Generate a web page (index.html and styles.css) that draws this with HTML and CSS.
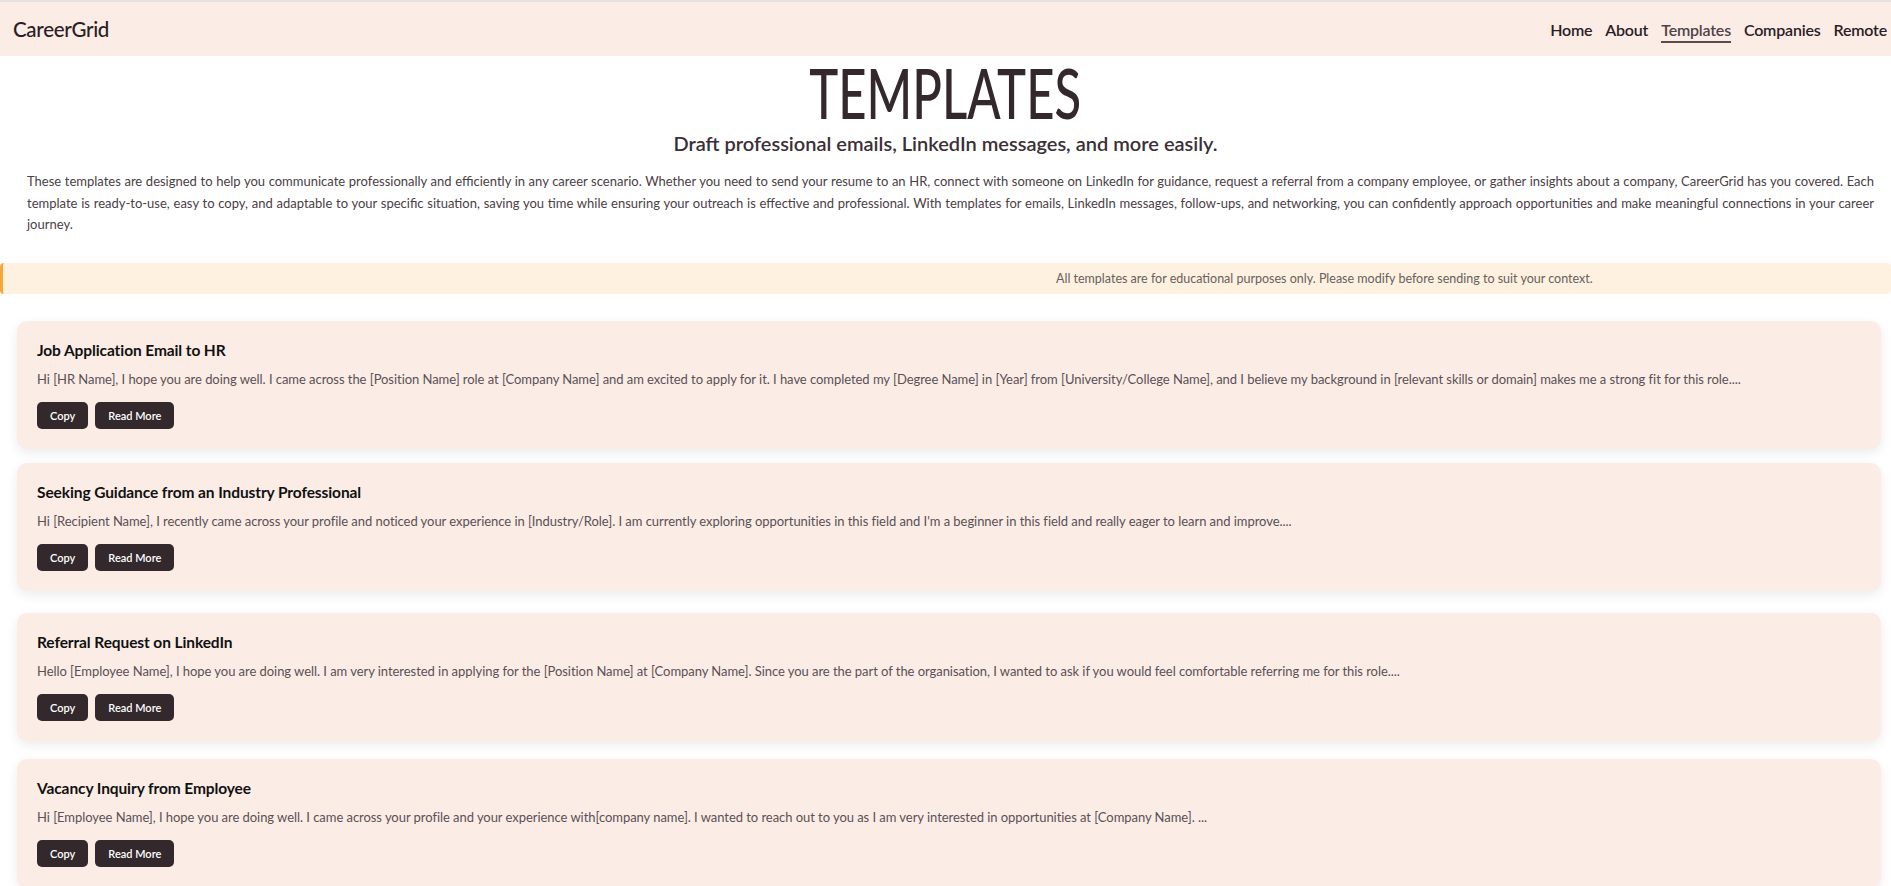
FILE: index.html
```html
<!DOCTYPE html>
<html lang="en">
<head>
<meta charset="utf-8">
<title>Templates | CareerGrid</title>
<link rel="stylesheet" href="styles.css">
</head>
<body>
<nav class="topnav">
  <a class="logo" href="#">CareerGrid</a>
  <ul class="nav-links">
    <li><a href="#">Home</a></li>
    <li><a href="#">About</a></li>
    <li><a class="active" href="#">Templates</a></li>
    <li><a href="#">Companies</a></li>
    <li><a href="#">Remote</a></li>
  </ul>
</nav>

<header class="hero">
  <h1 class="hero-title"><span class="hero-title-text">TEMPLATES</span></h1>
  <h2 class="hero-sub">Draft professional emails, LinkedIn messages, and more easily.</h2>
  <p class="hero-text">These templates are designed to help you communicate professionally and efficiently in any career scenario. Whether you need to send your resume to an HR, connect with someone on LinkedIn for guidance, request a referral from a company employee, or gather insights about a company, CareerGrid has you covered. Each template is ready-to-use, easy to copy, and adaptable to your specific situation, saving you time while ensuring your outreach is effective and professional. With templates for emails, LinkedIn messages, follow-ups, and networking, you can confidently approach opportunities and make meaningful connections in your career journey.</p>
</header>

<div class="notice">All templates are for educational purposes only. Please modify before sending to suit your context.</div>

<main class="cards">
  <section class="card">
    <h3 class="card-title">Job Application Email to HR</h3>
    <p class="card-text">Hi [HR Name], I hope you are doing well. I came across the [Position Name] role at [Company Name] and am excited to apply for it. I have completed my [Degree Name] in [Year] from [University/College Name], and I believe my background in [relevant skills or domain] makes me a strong fit for this role....</p>
    <div class="card-actions"><button class="btn">Copy</button><button class="btn">Read More</button></div>
  </section>
  <section class="card">
    <h3 class="card-title">Seeking Guidance from an Industry Professional</h3>
    <p class="card-text">Hi [Recipient Name], I recently came across your profile and noticed your experience in [Industry/Role]. I am currently exploring opportunities in this field and I'm a beginner in this field and really eager to learn and improve....</p>
    <div class="card-actions"><button class="btn">Copy</button><button class="btn">Read More</button></div>
  </section>
  <section class="card">
    <h3 class="card-title">Referral Request on LinkedIn</h3>
    <p class="card-text">Hello [Employee Name], I hope you are doing well. I am very interested in applying for the [Position Name] at [Company Name]. Since you are the part of the organisation, I wanted to ask if you would feel comfortable referring me for this role....</p>
    <div class="card-actions"><button class="btn">Copy</button><button class="btn">Read More</button></div>
  </section>
  <section class="card">
    <h3 class="card-title">Vacancy Inquiry from Employee</h3>
    <p class="card-text">Hi [Employee Name], I hope you are doing well. I came across your profile and your experience with[company name]. I wanted to reach out to you as I am very interested in opportunities at [Company Name]. ...</p>
    <div class="card-actions"><button class="btn">Copy</button><button class="btn">Read More</button></div>
  </section>
  <section class="card">
    <h3 class="card-title">Follow-up After Interview</h3>
    <p class="card-text">Hi [Interviewer Name], thank you for taking the time to speak with me about the [Position Name] role at [Company Name]. ...</p>
    <div class="card-actions"><button class="btn">Copy</button><button class="btn">Read More</button></div>
  </section>
</main>
</body>
</html>
```

FILE: styles.css
```css
* { box-sizing: border-box; }

html, body {
  margin: 0;
  padding: 0;
  background: #ffffff;
  overflow-x: hidden;
}

body {
  font-family: "Lato", "Liberation Sans", sans-serif;
  color: #33282b;
}

.topnav {
  display: flex;
  justify-content: space-between;
  align-items: center;
  height: 56px;
  padding: 0 4px 0 13px;
  background: #fbede6;
  border-top: 2px solid #e4e2e2;
}

.logo {
  font-size: 20.5px;
  font-weight: 500;
  color: #2a2024;
  text-decoration: none;
  letter-spacing: -0.3px;
}

.nav-links {
  list-style: none;
  display: flex;
  gap: 13px;
  margin: 0;
  padding: 0;
}

.nav-links a {
  display: block;
  font-size: 16px;
  font-weight: 600;
  color: #2a2024;
  text-decoration: none;
  letter-spacing: -0.2px;
  padding: 4px 0 2px;
  border-bottom: 2px solid transparent;
}

.nav-links a.active {
  color: #4e4247;
  border-bottom-color: #5b4b50;
}

.hero {
  text-align: center;
}

.hero-title {
  margin: 1px 0 0;
  font-size: 70px;
  line-height: 70px;
  font-weight: 500;
  color: #33282b;
}

.hero-title-text {
  display: inline-block;
  transform: scaleX(0.7);
}

.hero-sub {
  margin: 4px 0 0;
  font-size: 20px;
  line-height: 24px;
  font-weight: 600;
  color: #3b3035;
}

.hero-text {
  margin: 16px 0 0;
  padding: 0 17px 0 27px;
  font-size: 13px;
  line-height: 21.5px;
  text-align: justify;
  color: #4a4045;
}

.notice {
  margin: 27px 0 0;
  padding: 8px 0 8px 1053px;
  background: #fff1e0;
  border-left: 3px solid #f5a93a;
  border-radius: 4px;
  font-size: 12.5px;
  line-height: 15px;
  color: #66605f;
}

.cards {
  display: flex;
  flex-direction: column;
  gap: 14px;
  padding: 27px 10px 20px 17px;
}

.card {
  background: #fbede6;
  border-radius: 10px;
  padding: 19px 20px 20px;
  box-shadow: 0 4px 12px rgba(0, 0, 0, 0.08);
}

.card:nth-child(2) { margin-bottom: 8px; }
.card:nth-child(3) { margin-bottom: 4px; }

.card-title {
  margin: 0;
  font-size: 15.5px;
  line-height: 20px;
  font-weight: 700;
  letter-spacing: -0.1px;
  color: #111111;
}

.card-text {
  margin: 9px 0 0;
  font-size: 13px;
  line-height: 20px;
  letter-spacing: -0.05px;
  color: #5a5055;
}

.card-actions {
  display: flex;
  gap: 7px;
  margin-top: 13px;
}

.btn {
  height: 27px;
  padding: 0 13px;
  border: 0;
  border-radius: 5px;
  background: #33282b;
  color: #ffffff;
  font-family: inherit;
  font-size: 11px;
  font-weight: 600;
}
```
